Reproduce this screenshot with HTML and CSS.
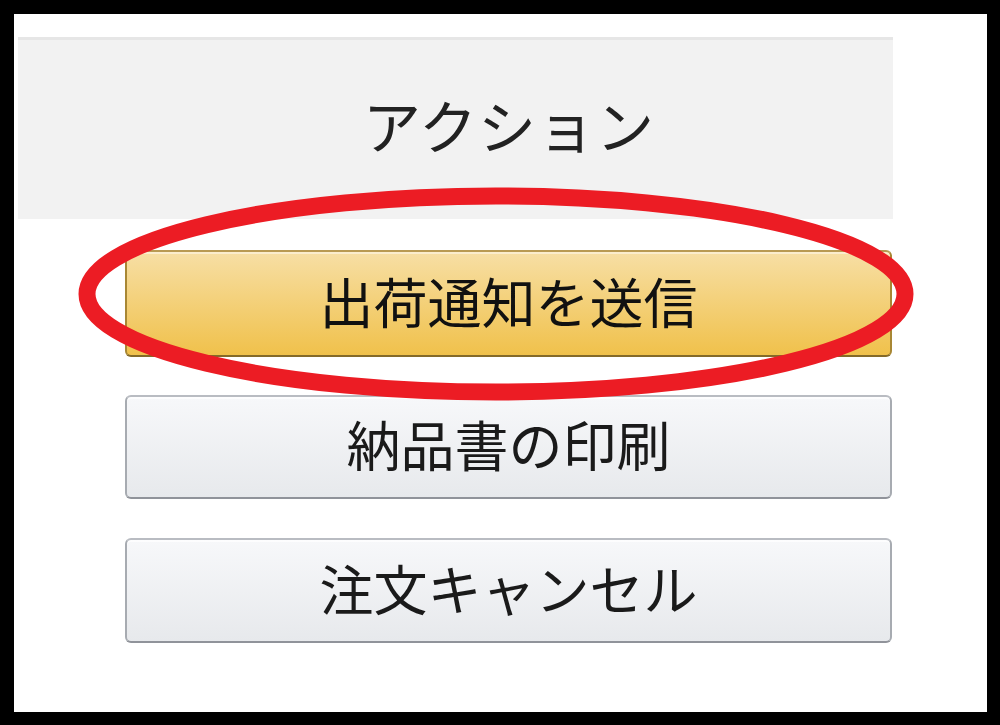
FILE: index.html
```html
<!DOCTYPE html>
<html lang="ja">
<head>
    <meta charset="UTF-8">
    <meta name="viewport" content="width=device-width, initial-scale=1.0">
    <title>アクション</title>
    <link rel="stylesheet" href="styles.css">
</head>
<body>
    <div class="frame">
        <div class="actions-header">
            <span class="header-title">アクション</span>
        </div>

        <div class="action-list">
            <button type="button" class="btn btn-primary">出荷通知を送信</button>
            <button type="button" class="btn">納品書の印刷</button>
            <button type="button" class="btn btn-last">注文キャンセル</button>
        </div>

        <!-- red highlight round the main button -->
        <svg class="highlight" width="860" height="230" viewBox="0 0 860 230">
            <ellipse cx="430" cy="115" rx="409" ry="98" fill="none" stroke="#ec1c24" stroke-width="17"/>
        </svg>
    </div>
</body>
</html>
```

FILE: styles.css
```css
html, body {
    margin: 0;
    padding: 0;
}
body {
    width: 1000px;
    height: 725px;
    background-color: #000;
    font-family: "Noto Sans CJK JP", "Noto Sans", sans-serif;
    overflow: hidden;
}
.frame {
    position: relative;
    margin: 14px 13px 0 14px;
    height: 675px;
    padding-top: 23px;
    padding-left: 4px;
    background-color: #fff;
}
.actions-header {
    width: 875px;
    height: 182px;
    box-sizing: border-box;
    border-top: 3px solid #e6e6e6;
    background-color: #f2f2f2;
    padding-left: 107px;
    display: flex;
    align-items: center;
    justify-content: center;
}
.header-title {
    font-size: 58px;
    color: #222;
    line-height: 1;
    margin-top: -12px;
    letter-spacing: 1px;
}
.action-list {
    display: flex;
    flex-direction: column;
    gap: 38px;
    margin-top: 31px;
    margin-left: 107px;
    width: 767px;
}
.btn {
    height: 104px;
    box-sizing: border-box;
    border: 2px solid;
    border-color: #b9bcc2 #a7abb1 #90939a;
    border-radius: 6px;
    background: linear-gradient(to bottom, #f7f8fa, #e7e9ec);
    box-shadow: inset 0 2px 0 rgba(255, 255, 255, 0.7);
    font-family: inherit;
    font-size: 54px;
    color: #1a1a1a;
    line-height: 1;
    padding: 0 0 6px 0;
    cursor: pointer;
}
.btn-primary {
    height: 107px;
    border-color: #b99a52 #a88734 #846a29;
    background: linear-gradient(to bottom, #f7dfa5, #f0c14b);
    box-shadow: inset 0 2px 0 rgba(255, 255, 255, 0.45);
    color: #111;
}
.btn-last {
    height: 105px;
    margin-top: 1px;
}
.highlight {
    position: absolute;
    left: 52px;
    top: 165px;
}
```
